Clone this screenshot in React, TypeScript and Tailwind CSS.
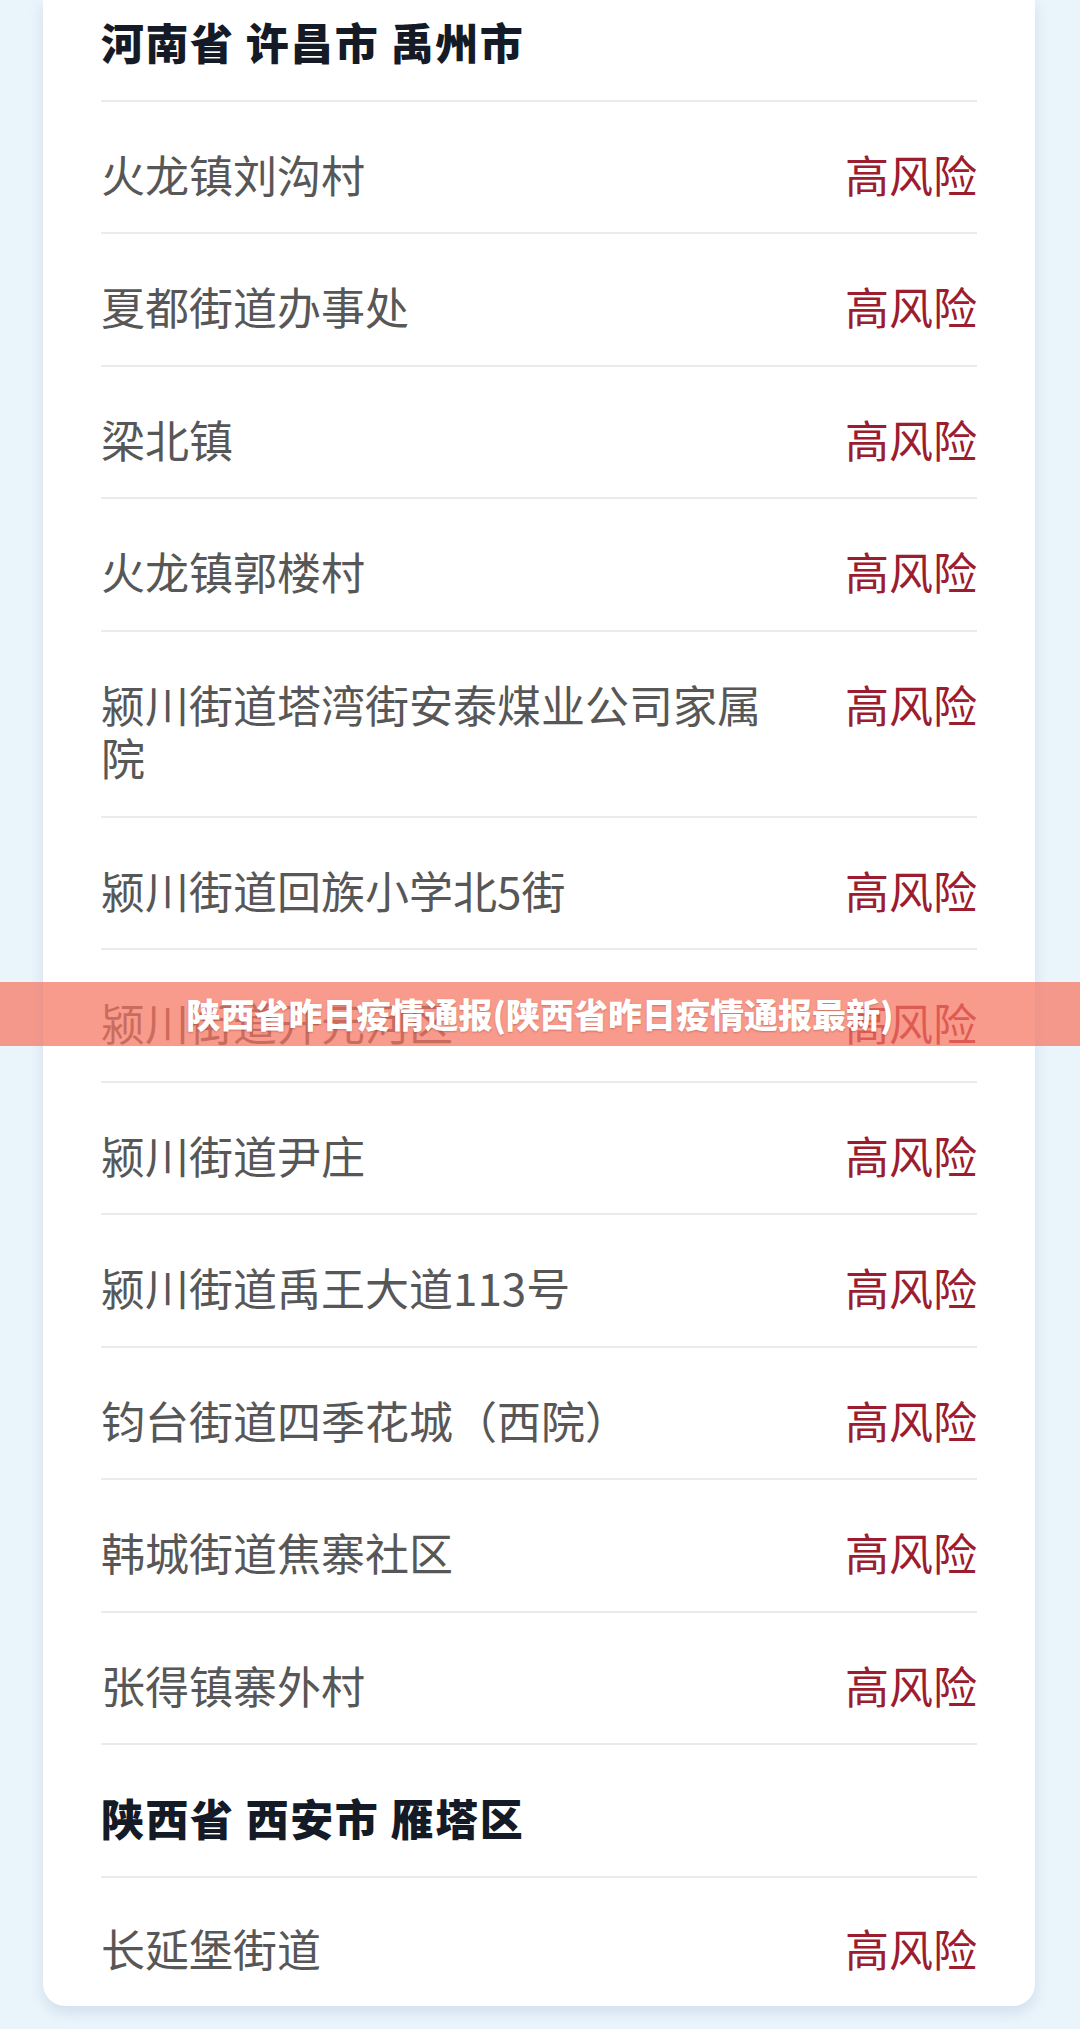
import React from "react";

const FONT = '"Noto Sans CJK SC", "Noto Sans", sans-serif';

type Item =
  | { kind: "head"; text: string }
  | { kind: "row"; text: string };

const items: Item[] = [
  { kind: "row", text: "火龙镇刘沟村" },
  { kind: "row", text: "夏都街道办事处" },
  { kind: "row", text: "梁北镇" },
  { kind: "row", text: "火龙镇郭楼村" },
  { kind: "row", text: "颍川街道塔湾街安泰煤业公司家属院" },
  { kind: "row", text: "颍川街道回族小学北5街" },
  { kind: "row", text: "颍川街道开元河区" },
  { kind: "row", text: "颍川街道尹庄" },
  { kind: "row", text: "颍川街道禹王大道113号" },
  { kind: "row", text: "钧台街道四季花城（西院）" },
  { kind: "row", text: "韩城街道焦寨社区" },
  { kind: "row", text: "张得镇寨外村" },
  { kind: "head", text: "陕西省 西安市 雁塔区" },
  { kind: "row", text: "长延堡街道" },
];

export default function App() {
  return (
    <div
      className="relative w-[1080px] min-h-[2029px] bg-[#eaf4fb] pb-[21px]"
      style={{ fontFamily: FONT }}
    >
      <div className="mx-[43px] w-[992px] rounded-b-[22px] bg-white px-[58px] shadow-[0_6px_14px_rgba(140,170,200,0.28)]">
        <div className="border-b-2 border-[#ebebeb] pt-[15px] pb-[31px] text-[43px] leading-[53.5px] font-black tracking-[1.5px] text-[#141a26]">
          河南省 许昌市 禹州市
        </div>
        {items.map((it, i) => {
          const last = i === items.length - 1;
          if (it.kind === "head") {
            return (
              <div
                key={i}
                className="border-b-2 border-[#ebebeb] pt-[46px] pb-[31px] text-[43px] leading-[53.5px] font-black tracking-[1.5px] text-[#141a26]"
              >
                {it.text}
              </div>
            );
          }
          return (
            <div
              key={i}
              className={
                last
                  ? "flex items-start justify-between pt-[44px] pb-[31px]"
                  : "flex items-start justify-between border-b-2 border-[#ebebeb] pt-[46px] pb-[31px]"
              }
            >
              <div className="w-[690px] text-[44px] leading-[53.5px] text-[#575757]">
                {it.text}
              </div>
              <div className="text-[44px] leading-[53.5px] text-[#9c1c30]">
                高风险
              </div>
            </div>
          );
        })}
      </div>

      <div className="absolute left-0 top-[982px] flex h-[64px] w-[1080px] items-center justify-center bg-[rgba(246,117,96,0.72)]">
        <span className="text-[34px] leading-none font-black text-white [text-shadow:0_1px_2px_rgba(120,40,30,0.35)]">
          陕西省昨日疫情通报(陕西省昨日疫情通报最新)
        </span>
      </div>
    </div>
  );
}
